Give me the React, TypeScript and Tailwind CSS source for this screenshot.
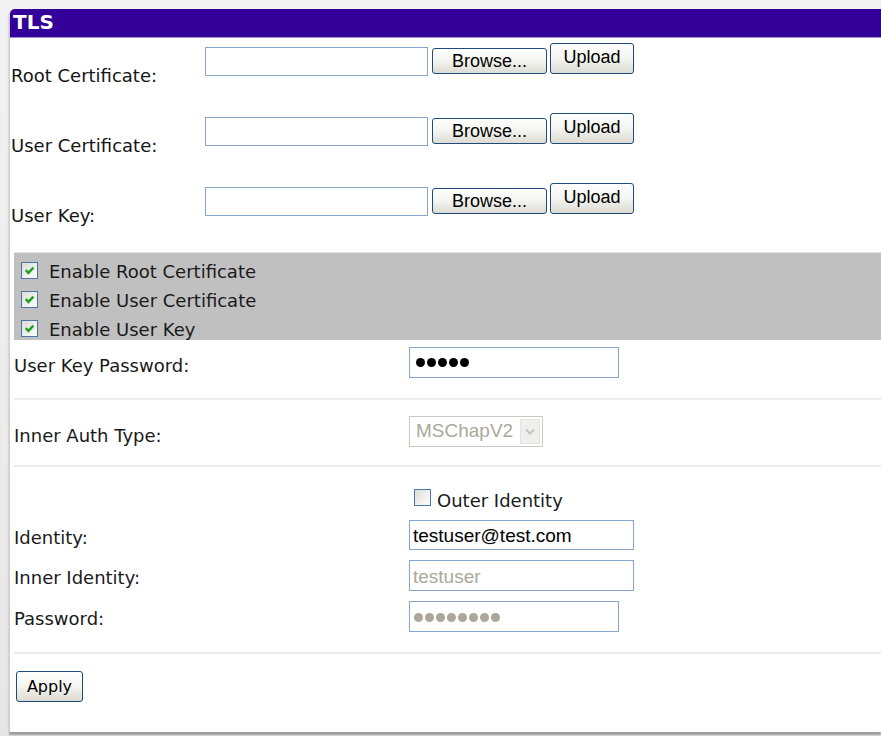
import React from "react";

const sans = { fontFamily: '"DejaVu Sans", Verdana, sans-serif' };
const arial = { fontFamily: '"Liberation Sans", Arial, sans-serif' };

function XpButton({ label, className }: { label: string; className: string }) {
  return (
    <div
      className={`flex items-center justify-center rounded-[3px] border border-[#1f4a7c] bg-gradient-to-b from-white via-[#f4f4f0] to-[#dcdcd4] text-[18px] text-black ${className}`}
      style={arial}
    >
      {label}
    </div>
  );
}

function CheckBox({ checked }: { checked: boolean }) {
  return (
    <div className="flex h-[17px] w-[17px] shrink-0 items-center justify-center border border-[#4e77a8] bg-gradient-to-br from-[#dcdcd6] to-white">
      {checked && (
        <svg width="11" height="11" viewBox="0 0 11 11">
          <path d="M1.8 5.2 L4.4 7.9 L9.4 2.6" fill="none" stroke="#21a121" strokeWidth="2.4" />
        </svg>
      )}
    </div>
  );
}

function Dots({ count, color }: { count: number; color: string }) {
  return (
    <div className="flex gap-[2px]">
      {Array.from({ length: count }).map((_, i) => (
        <span key={i} className={`h-[9px] w-[9px] rounded-full ${color}`} />
      ))}
    </div>
  );
}

function CertRow({ label }: { label: string }) {
  return (
    <div className="flex h-[70px]">
      <div className="w-[194px] pt-[24px] text-[18px] text-[#151515]" style={sans}>
        {label}
      </div>
      <div className="flex items-start">
        <div className="mt-[9px] h-[29px] w-[223px] border border-[#86a6cf] bg-white" />
        <XpButton label="Browse..." className="ml-[4px] mt-[10px] h-[26px] w-[115px] pt-[1px]" />
        <XpButton label="Upload" className="ml-[3px] mt-[5px] h-[31px] w-[84px] pb-[3px]" />
      </div>
    </div>
  );
}

function Separator() {
  return <div className="h-[2px] bg-[#ececec]" />;
}

export default function App() {
  const certs = ["Root Certificate:", "User Certificate:", "User Key:"];
  const enables = ["Enable Root Certificate", "Enable User Certificate", "Enable User Key"];

  return (
    <div className="h-[736px] w-full overflow-hidden bg-gradient-to-b from-[#f2f2f2] to-[#e6e6e6] pl-[9px] pt-[9px]">
      <div className="h-[723px] rounded-tl-[5px] border-l border-[#cfcfcf] bg-white shadow-[0_3px_2px_#9c9c9c]">
        {/* title bar */}
        <div className="h-[29px] rounded-tl-[5px] border-b border-[#9d8fd2] bg-[#330099] pl-[3px] pt-[2px]">
          <span className="text-[20px] font-bold leading-[22px] text-white" style={sans}>
            TLS
          </span>
        </div>

        {/* certificate uploads */}
        <div className="pl-[1px]">
          {certs.map((c) => (
            <CertRow key={c} label={c} />
          ))}
        </div>

        <div className="pl-[4px] pt-[4px]">
          <div className="h-[88px] border-t border-[#e2e2e2] bg-[#c0c0c0] pt-[3px]">
            {enables.map((e) => (
              <div key={e} className="flex h-[29px] items-center pl-[7px]">
                <CheckBox checked />
                <span className="ml-[11px] pt-[2px] text-[18px] text-[#1a1a1a]" style={sans}>
                  {e}
                </span>
              </div>
            ))}
          </div>

          {/* key password */}
          <div className="flex h-[58px] items-start pt-[7px]">
            <div className="w-[395px] pt-[5px] text-[18px] text-[#1a1a1a]" style={sans}>
              User Key Password:
            </div>
            <div className="flex h-[31px] w-[210px] items-center border border-[#86a6cf] pl-[6px]">
              <Dots count={5} color="bg-black" />
            </div>
          </div>
          <Separator />

          {/* inner auth */}
          <div className="flex h-[65px] items-start pt-[16px]">
            <div className="w-[395px] pt-[6px] text-[18px] text-[#1a1a1a]" style={sans}>
              Inner Auth Type:
            </div>
            <div className="flex h-[31px] w-[134px] items-center border border-[#c9c9c4] bg-white">
              <span className="flex-1 pl-[6px] text-[19px] text-[#aca899]" style={arial}>
                MSChapV2
              </span>
              <div className="mr-[2px] flex h-[25px] w-[20px] items-center justify-center border border-[#e3e3e0] bg-[#efefec]">
                <svg width="10" height="7" viewBox="0 0 10 7">
                  <path d="M1 1.5 L5 5.5 L9 1.5" fill="none" stroke="#c4c4c0" strokeWidth="2" />
                </svg>
              </div>
            </div>
          </div>
          <Separator />

          {/* identity */}
          <div className="pt-[22px]">
            <div className="flex h-[17px] items-center">
              <div className="w-[400px]" />
              <CheckBox checked={false} />
              <span className="ml-[6px] pt-[5px] text-[18px] text-[#1a1a1a]" style={sans}>
                Outer Identity
              </span>
            </div>
            <div className="mt-[14px] flex h-[30px] items-center">
              <div className="w-[395px] pt-[4px] text-[18px] text-[#1a1a1a]" style={sans}>
                Identity:
              </div>
              <div
                className="flex h-[30px] w-[225px] items-center border border-[#86a6cf] pl-[3px] pt-[3px] text-[19px] text-black"
                style={arial}
              >
                testuser@test.com
              </div>
            </div>
            <div className="mt-[10px] flex h-[31px] items-center">
              <div className="w-[395px] pt-[3px] text-[18px] text-[#1a1a1a]" style={sans}>
                Inner Identity:
              </div>
              <div
                className="flex h-[31px] w-[225px] items-center border border-[#86a6cf] pl-[3px] pt-[3px] text-[19px] text-[#aca899]"
                style={arial}
              >
                testuser
              </div>
            </div>
            <div className="mt-[10px] flex h-[31px] items-center">
              <div className="w-[395px] pt-[3px] text-[18px] text-[#1a1a1a]" style={sans}>
                Password:
              </div>
              <div className="flex h-[31px] w-[210px] items-center border border-[#86a6cf] pl-[4px] pt-[1px]">
                <Dots count={8} color="bg-[#aca899]" />
              </div>
            </div>
          </div>

          <div className="mt-[20px]">
            <Separator />
          </div>

          <div className="pl-[2px] pt-[17px]">
            <div
              className="flex h-[31px] w-[67px] items-center justify-center rounded-[3px] border border-[#1f4a7c] bg-gradient-to-b from-white via-[#f4f4f0] to-[#dcdcd4] text-[16px] text-black"
              style={sans}
            >
              Apply
            </div>
          </div>
        </div>
      </div>
    </div>
  );
}
